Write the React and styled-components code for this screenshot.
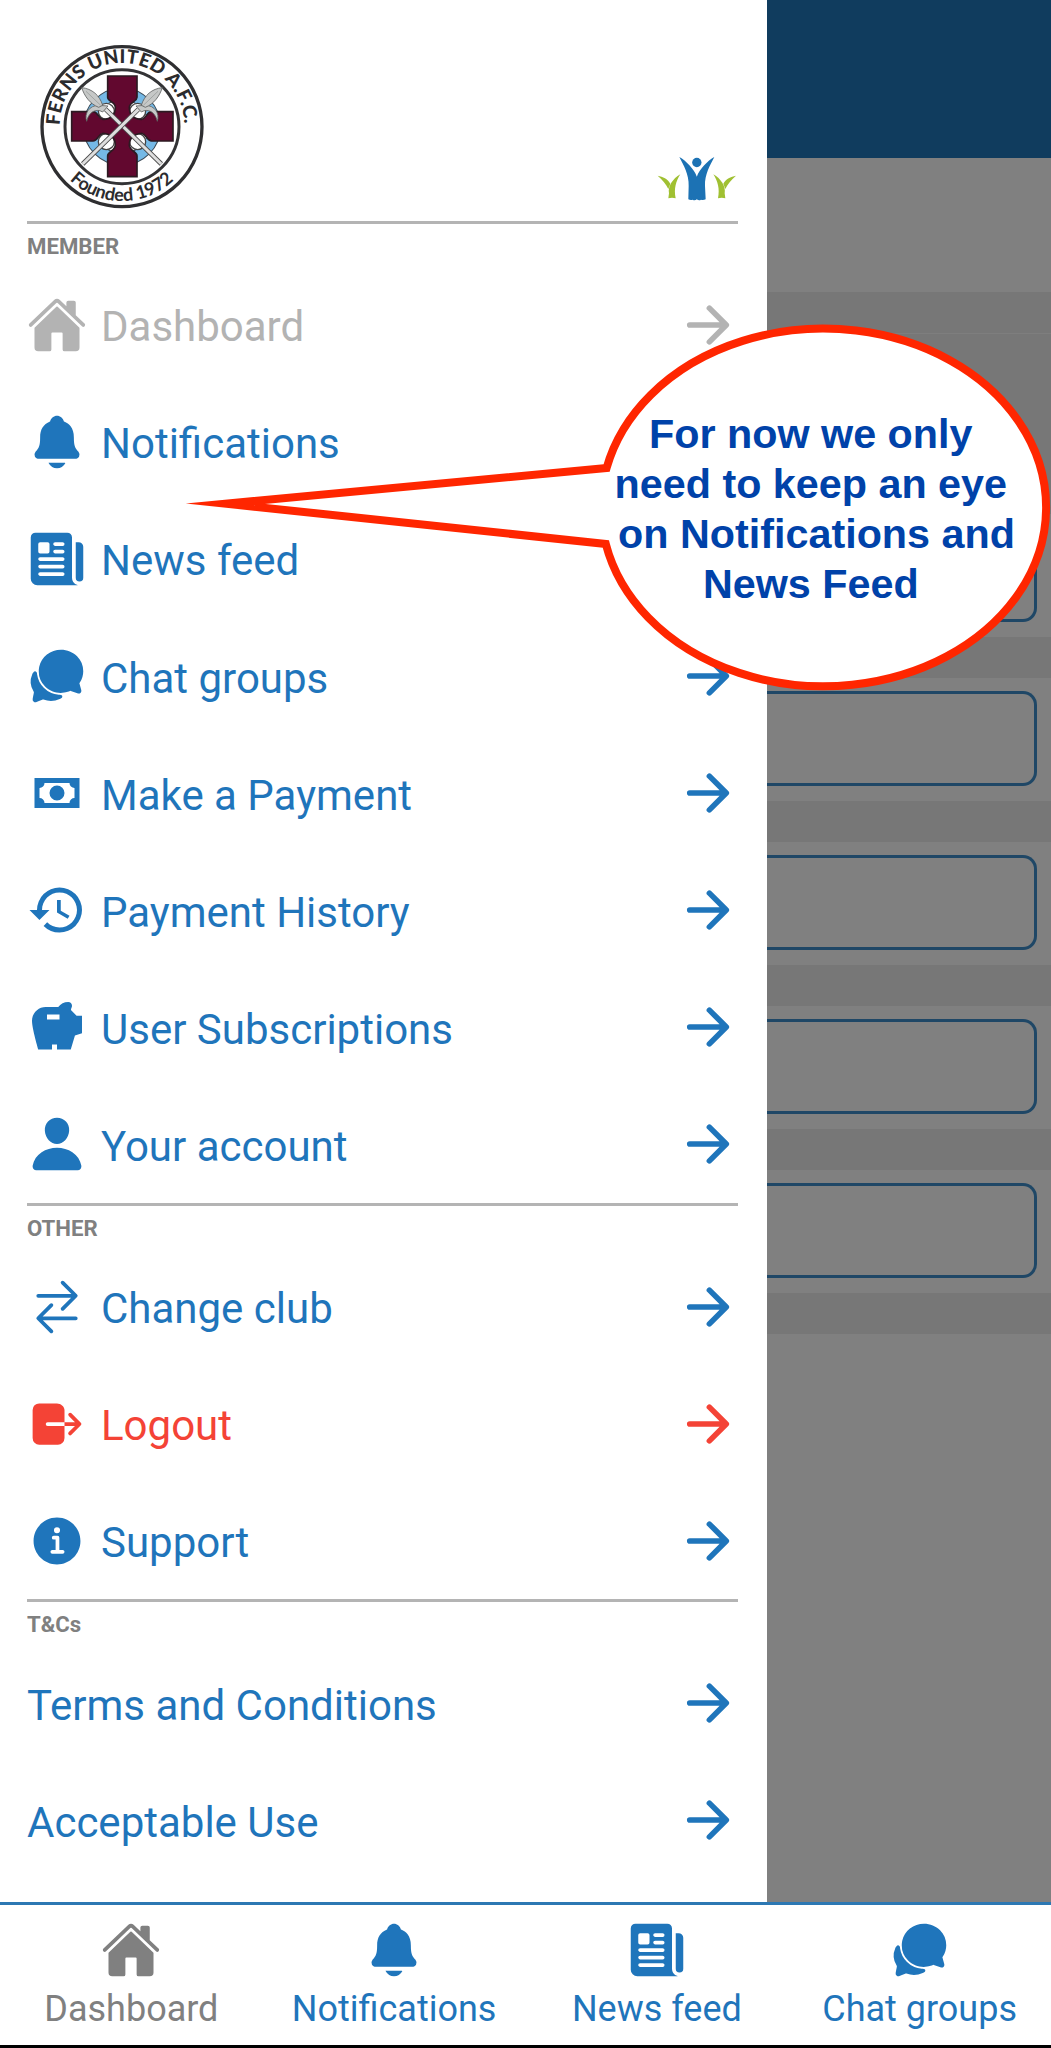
import React from "react";
import styled, { createGlobalStyle } from "styled-components";
import {
  IoHome,
  IoNotifications,
  IoNewspaper,
  IoChatbubbles,
  IoPerson,
  IoSwapHorizontal,
  IoLogOut,
  IoInformationCircle,
  IoArrowForward,
} from "react-icons/io5";
import { MdHistory } from "react-icons/md";

const BLUE = "#1f75bb";
const RED = "#f44336";
const MUTED = "#b3b3b3";

const GlobalStyle = createGlobalStyle`
  * { box-sizing: border-box; }
  body { margin: 0; background: #fff; }
`;

const Screen = styled.div`
  position: relative;
  display: flex;
  flex-direction: column;
  width: 1051px;
  height: 2048px;
  overflow: hidden;
  background: #fff;
  font-family: Roboto, "Liberation Sans", sans-serif;
`;

const Main = styled.main`
  display: flex;
  height: 1902px;
`;

const Drawer = styled.aside`
  width: 767px;
  padding: 0 29px 0 27px;
  background: #fff;
`;

const DrawerHeader = styled.header`
  display: flex;
  justify-content: space-between;
  align-items: flex-start;
  height: 221px;
  padding: 44px 0 0 13px;
`;

const Crest = styled.svg`
  width: 164px;
  height: 165.3px;
`;

const AppMark = styled.svg`
  width: 80px;
  height: 45px;
  margin-top: 112px;
  margin-right: 1px;
`;

const SectionTitle = styled.h2`
  height: 45.2px;
  margin: 0;
  border-top: 3px solid #b4b4b4;
  color: #808080;
  font-size: 22.2px;
  font-weight: 700;
  line-height: 44px;
`;

const Row = styled.a`
  display: flex;
  align-items: center;
  height: 117.1px;
  color: ${(p) => p.$color};

  svg {
    flex: none;
    width: 60px;
    height: 60px;
  }
`;

const RowLabel = styled.span`
  flex: 1;
  padding: 5px 0 0 ${(p) => (p.$plain ? 0 : 14)}px;
  font-size: 42px;
  line-height: 50px;
  white-space: nowrap;
`;

const Backdrop = styled.section`
  flex: 1;
  background: #808080;
`;

const TopBar = styled.div`
  height: 158px;
  background: #103c5e;
`;

const Heading = styled.div`
  height: 134px;
`;

const Band = styled.div`
  height: ${(p) => p.$h}px;
  background: #777;
`;

const Rule = styled.div`
  height: 1px;
  background: #7e7e7e;
`;

const Card = styled.div`
  height: 123px;
  padding: 13px 14.5px 15px 0;
`;

const Field = styled.div`
  height: 95px;
  border: 3px solid #1f4766;
  border-left: 0;
  border-radius: 0 14px 14px 0;
`;

const TabBar = styled.nav`
  display: flex;
  height: 146px;
  border-top: 3px solid #2d78b3;
  border-bottom: 3px solid #000;
`;

const Tab = styled.a`
  display: flex;
  flex: 1;
  flex-direction: column;
  align-items: center;
  padding-top: 15px;
  color: ${(p) => p.$color};
  font-size: 36px;
  line-height: 42px;
  white-space: nowrap;

  svg {
    width: 60px;
    height: 60px;
    margin-bottom: 8px;
  }
`;

const Callout = styled.div`
  position: absolute;
  top: 320px;
  left: 180px;
  width: 871px;
  height: 376px;
`;

const CalloutShape = styled.svg`
  display: block;
  width: 871px;
  height: 376px;
`;

const CalloutText = styled.div`
  position: absolute;
  top: 89px;
  left: 386px;
  width: 501px;
  color: #0042a9;
  font: 700 41.3px/50px "Liberation Sans", Arial, sans-serif;
  text-align: center;
  white-space: pre;
`;

function Banknote() {
  return (
    <svg viewBox="0 0 24 24" fill="currentColor">
      <path d="M3,6H21V18H3V6M12,9A3,3 0 0,1 15,12A3,3 0 0,1 12,15A3,3 0 0,1 9,12A3,3 0 0,1 12,9M7,8A2,2 0 0,1 5,10V14A2,2 0 0,1 7,16H17A2,2 0 0,1 19,14V10A2,2 0 0,1 17,8H7Z" />
    </svg>
  );
}

function PiggyBank() {
  return (
    <svg viewBox="0 0 24 24" fill="currentColor">
      <path d="M15,10C15,9.45 15.45,9 16,9C16.55,9 17,9.45 17,10C17,10.55 16.55,11 16,11C15.45,11 15,10.55 15,10M22,7.5V14.47L19.18,15.41L17.5,21H12V19H10V21H4.5C4.5,21 2,12.54 2,9.5C2,6.46 4.46,4 7.5,4H12.5C13.41,2.79 14.86,2 16.5,2C17.33,2 18,2.67 18,3.5C18,3.71 17.96,3.9 17.88,4.08C17.74,4.42 17.62,4.81 17.56,5.23L19.83,7.5H22M13,9V7H8V9H13Z" />
    </svg>
  );
}

function Axe() {
  return (
    <g>
      <path d="M248 432L415 268" stroke="#4a4a4a" strokeWidth="14" />
      <path d="M248 432L415 268" stroke="#dedede" strokeWidth="9" />
      <g fill="#c6c8c7" stroke="#5e6060" strokeWidth="2.5" strokeLinejoin="round">
        <path d="M408 258L424 276C444 264 466 276 472 304C480 280 464 256 436 256Z" />
        <path d="M487 203C456 206 433 226 424 256L436 262C462 252 479 228 487 203Z" />
      </g>
      <path d="M430 256L474 214" stroke="#9a9d9c" strokeWidth="2.5" />
    </g>
  );
}

function ClubCrest() {
  return (
    <Crest viewBox="120 72 492 496">
      <defs>
        <path id="crest-top" d="M179 316A187 187 0 0 1 553 316" />
        <path id="crest-bottom" d="M209 480A225 225 0 0 0 531 471" />
      </defs>
      <circle cx="366" cy="320" r="240" fill="#fff" stroke="#2f2f31" strokeWidth="10" />
      <circle cx="366" cy="320" r="171" fill="#fff" stroke="#333335" strokeWidth="9" />
      <circle cx="366" cy="320" r="98" fill="none" stroke="#3c4c58" strokeWidth="38" />
      <circle cx="366" cy="320" r="98" fill="none" stroke="#75b9e6" strokeWidth="32" />
      <g fill="#fff" stroke="#444" strokeWidth="4">
        <circle cx="319" cy="274" r="24" />
        <circle cx="413" cy="274" r="24" />
        <circle cx="319" cy="365" r="24" />
        <circle cx="413" cy="365" r="24" />
      </g>
      <path
        d="M323 168H411V232C411 245 390 245 388 262C388 285 400 298 425 298C440 296 440 275 455 275H519V363H455C440 363 440 342 425 340C400 342 388 352 388 375C388 392 411 395 411 408V470H323V408C323 395 346 392 346 375C346 352 334 342 309 340C294 342 294 363 279 363H215V275H279C294 275 294 296 309 298C334 298 346 285 346 262C346 245 323 245 323 232Z"
        fill="#62082f"
        stroke="#2c1a22"
        strokeWidth="5"
      />
      <g transform="translate(732 0) scale(-1 1)">
        <Axe />
      </g>
      <Axe />
      <g fill="#2b2b2d" fontFamily="Lato, sans-serif">
        <text fontSize="57" fontWeight="900" textLength="582" lengthAdjust="spacing">
          <textPath href="#crest-top" textLength="582">FERNS UNITED A.F.C.</textPath>
        </text>
        <text fontSize="54" fontWeight="700" textLength="346" lengthAdjust="spacing">
          <textPath href="#crest-bottom" textLength="346">Founded 1972</textPath>
        </text>
      </g>
    </Crest>
  );
}

function Leaf() {
  return (
    <path d="M243 165C220 178 205 202 209 222L207 237Q218 233 229 237C223 208 230 185 243 165ZM175 169C190 183 200 194 207 209L213 193C205 178 191 172 175 169Z" />
  );
}

function PeopleMark() {
  return (
    <AppMark viewBox="173 110 240 135">
      <g fill="#a0c032">
        <Leaf />
        <g transform="translate(585 0) scale(-1 1)">
          <Leaf />
        </g>
      </g>
      <g fill="#1c72b4">
        <circle cx="292.5" cy="129.5" r="14" />
        <path d="M240 113C260 124 285 150 292.5 172C300 150 325 124 345 113C332 138 316 166 317 200L319 240Q311 244 305 241Q299 245 292.5 240Q286 245 280 241Q274 244 267 240L268 200C269 166 253 138 240 113Z" />
      </g>
    </AppMark>
  );
}

const sections = [
  {
    title: "MEMBER",
    items: [
      { label: "Dashboard", Icon: IoHome, color: MUTED },
      { label: "Notifications", Icon: IoNotifications },
      { label: "News feed", Icon: IoNewspaper },
      { label: "Chat groups", Icon: IoChatbubbles },
      { label: "Make a Payment", Icon: Banknote },
      { label: "Payment History", Icon: MdHistory },
      { label: "User Subscriptions", Icon: PiggyBank },
      { label: "Your account", Icon: IoPerson },
    ],
  },
  {
    title: "OTHER",
    items: [
      { label: "Change club", Icon: IoSwapHorizontal },
      { label: "Logout", Icon: IoLogOut, color: RED },
      { label: "Support", Icon: IoInformationCircle },
    ],
  },
  {
    title: "T&Cs",
    items: [{ label: "Terms and Conditions" }, { label: "Acceptable Use" }],
  },
];

const tabs = [
  { label: "Dashboard", Icon: IoHome, color: "#808080" },
  { label: "Notifications", Icon: IoNotifications },
  { label: "News feed", Icon: IoNewspaper },
  { label: "Chat groups", Icon: IoChatbubbles },
];

const calloutLines = [
  "For now we only ",
  "need to keep an eye ",
  "on Notifications and",
  "News Feed ",
];

function MenuRow({ label, Icon, color = BLUE }) {
  return (
    <Row $color={color}>
      {Icon && <Icon />}
      <RowLabel $plain={!Icon}>{label}</RowLabel>
      <IoArrowForward />
    </Row>
  );
}

export default function App() {
  return (
    <Screen>
      <GlobalStyle />
      <Main>
        <Drawer>
          <DrawerHeader>
            <ClubCrest />
            <PeopleMark />
          </DrawerHeader>
          {sections.map(({ title, items }) => (
            <React.Fragment key={title}>
              <SectionTitle>{title}</SectionTitle>
              {items.map((item) => (
                <MenuRow key={item.label} {...item} />
              ))}
            </React.Fragment>
          ))}
        </Drawer>
        <Backdrop>
          <TopBar />
          <Heading />
          <Band $h={41} />
          <Rule />
          <Band $h={180} />
          {[0, 1, 2, 3, 4].map((n) => (
            <React.Fragment key={n}>
              <Card>
                <Field />
              </Card>
              <Band $h={41} />
            </React.Fragment>
          ))}
        </Backdrop>
      </Main>
      <TabBar>
        {tabs.map(({ label, Icon, color = BLUE }) => (
          <Tab key={label} $color={color}>
            <Icon />
            {label}
          </Tab>
        ))}
      </TabBar>
      <Callout>
        <CalloutShape viewBox="180 320 871 376">
          <path
            d="M606.6 468A222.5 178.8 0 1 1 605.8 544L226 503.7Z"
            fill="#fff"
            stroke="#ff2600"
            strokeWidth="8"
            strokeMiterlimit="20"
          />
        </CalloutShape>
        <CalloutText>
          {calloutLines.map((line) => (
            <div key={line}>{line}</div>
          ))}
        </CalloutText>
      </Callout>
    </Screen>
  );
}
